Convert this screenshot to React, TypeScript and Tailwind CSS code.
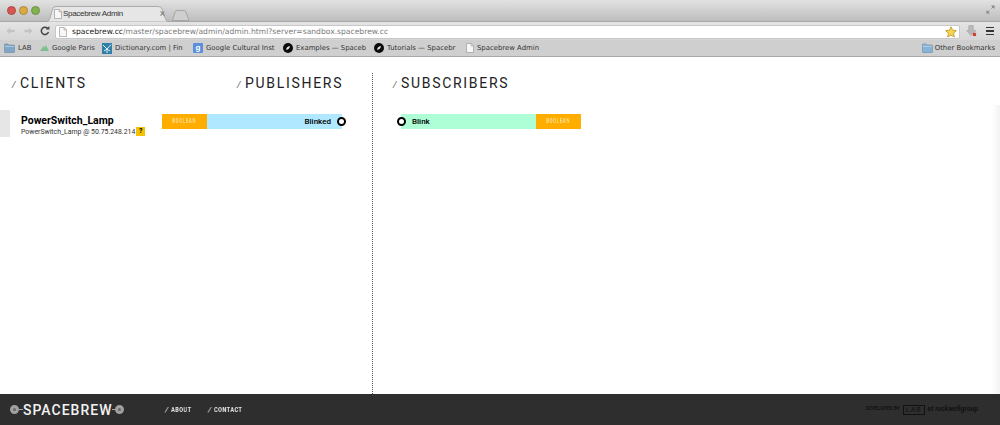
import React from "react";

const Folder = ({ c = "#7fa6c6" }: { c?: string }) => (
  <svg width="11" height="10" viewBox="0 0 14 11" preserveAspectRatio="none" className="shrink-0">
    <path d="M0.5 2 Q0.5 1 1.5 1 H5 L6 2.2 H12.5 Q13.5 2.2 13.5 3.2 V9.5 Q13.5 10.5 12.5 10.5 H1.5 Q0.5 10.5 0.5 9.5 Z" fill={c} stroke="#5d7f9c" strokeWidth="0.6" />
    <rect x="1" y="3.2" width="12" height="1" fill="#b9d1e4" />
  </svg>
);

const Page = ({ w = 8 }: { w?: number }) => (
  <svg width={w} height="10" viewBox="0 0 9 11" preserveAspectRatio="none" className="shrink-0">
    <path d="M0.5 0.5 H5.8 L8.5 3.2 V10.5 H0.5 Z" fill="#f7f7f7" stroke="#9a9a9a" strokeWidth="0.8" />
    <path d="M5.8 0.5 V3.2 H8.5" fill="none" stroke="#9a9a9a" strokeWidth="0.7" />
  </svg>
);

const Squid = () => (
  <svg width="10" height="10" viewBox="0 0 10 10" className="shrink-0">
    <circle cx="5" cy="5" r="5" fill="#0b0b0b" />
    <path d="M3 6.8 Q3.4 3.6 6.9 2.9 Q6.6 6.4 3 6.8 Z" fill="#e8e8e8" />
  </svg>
);

const Bookmark = ({ icon, label, w }: { icon: React.ReactNode; label: string; w: string }) => (
  <div className={`flex items-center gap-[3px] overflow-hidden shrink-0 ${w}`}>
    {icon}
    <span className="whitespace-nowrap">{label}</span>
  </div>
);

const Type = () => (
  <div className="w-[45px] h-full bg-[#ffae00] text-[#ffdf94] text-[6.5px] font-bold tracking-[1px] flex items-center justify-center shrink-0">
    <span className="inline-block scale-x-[0.66] will-change-transform">BOOLEAN</span>
  </div>
);

const Dot = () => <span className="w-[9px] h-[9px] rounded-full border-2 border-black bg-white shrink-0 block" />;

const Heading = ({ children, w }: { children: string; w: string }) => (
  <div className={`flex items-baseline shrink-0 ${w}`}>
    <span className="text-[9px] text-[#555] italic w-[8px]">/</span>
    <span className="text-[14px] leading-[20px] tracking-[1.7px] text-[#222]">{children}</span>
  </div>
);

const FooterLink = ({ label, w }: { label: string; w: string }) => (
  <span className={`flex items-baseline ${w}`}>
    <span className="italic font-normal w-[6px] shrink-0">/</span>
    <span className="inline-block origin-left scale-x-[0.7] whitespace-nowrap will-change-transform">{label}</span>
  </span>
);

export default function App() {
  return (
    <div className="w-[1000px] h-[425px] overflow-hidden flex flex-col bg-white font-['Roboto',sans-serif]">
      {/* title bar */}
      <div className="h-[22px] shrink-0 bg-gradient-to-b from-[#e2e2e2] to-[#bdbdbd] flex items-end relative border-b border-[#a8a8a8]">
        <div className="flex gap-[3px] ml-[7px] mb-[6px] self-end">
          <span className="w-[9px] h-[9px] rounded-full bg-[#d9564f] border border-[#a84a46]" />
          <span className="w-[9px] h-[9px] rounded-full bg-[#dba93e] border border-[#a98a3f]" />
          <span className="w-[9px] h-[9px] rounded-full bg-[#82b34f] border border-[#6f9146]" />
        </div>
        <div className="relative w-[124px] h-[16px] ml-[6px] -mb-px flex items-center pl-[8px] pr-[5px]">
          <svg width="124" height="16" viewBox="0 0 124 16" className="absolute left-0 top-0">
            <path d="M0 16 Q3 16 4 12 L6.5 3 Q7.5 0.5 10 0.5 H112 Q115 0.5 116 3 L119 12 Q120 16 124 16 Z" fill="#e6e6e6" stroke="#a0a0a0" strokeWidth="0.8" />
          </svg>
          <span className="relative flex items-center gap-[1px] flex-1 font-['Liberation_Sans',sans-serif] text-[8px] text-[#333] tracking-[-0.3px]">
            <Page />
            <span>Spacebrew Admin</span>
          </span>
          <span className="relative text-[10px] leading-none text-[#777]">×</span>
        </div>
        <svg width="18" height="11" viewBox="0 0 18 11" className="ml-[2px]">
          <path d="M0.5 10.5 L3 2 Q3.5 0.5 5 0.5 H12 Q13.5 0.5 14 2 L17 10.5 Z" fill="#cfcfcf" stroke="#9c9c9c" strokeWidth="0.8" />
        </svg>
        <svg width="9" height="9" viewBox="0 0 10 10" className="absolute right-[5px] top-[5px]">
          <path d="M1 9 L4 6 M9 1 L6 4" stroke="#8a8a8a" strokeWidth="1" />
          <path d="M0.5 5.5 V9.5 H4.5 Z M9.5 4.5 V0.5 H5.5 Z" fill="#8a8a8a" />
        </svg>
      </div>

      {/* toolbar */}
      <div className="h-[18px] shrink-0 bg-gradient-to-b from-[#e4e4e4] to-[#d6d6d6] flex items-center">
        <div className="flex items-center w-[55px] shrink-0 pl-[6px]">
          <svg width="9" height="8" viewBox="0 0 11 9"><path d="M5 0.5 L0.5 4.5 L5 8.5 V6 H10.5 V3 H5 Z" fill="#c4c4c4" /></svg>
          <svg width="9" height="8" viewBox="0 0 11 9" className="ml-[9px]"><path d="M6 0.5 L10.5 4.5 L6 8.5 V6 H0.5 V3 H6 Z" fill="#c4c4c4" /></svg>
          <svg width="10" height="10" viewBox="0 0 11 11" className="ml-[7px]">
            <path d="M8.8 3.2 A4 4 0 1 0 9.3 6.5" fill="none" stroke="#444" strokeWidth="1.7" />
            <path d="M6.4 3.9 H10.4 V0 Z" fill="#444" />
          </svg>
        </div>
        <div className="flex-1 h-[14px] mt-[1px] bg-white rounded-[2px] border border-[#c8c8c8] flex items-center pl-[3px] pr-[2px] font-['DejaVu_Sans',sans-serif] text-[7.6px] text-[#7b7b7b]">
          <Page />
          <span className="ml-[5px]"><span className="text-[#222]">spacebrew.cc</span>/master/spacebrew/admin/admin.html?server=sandbox.spacebrew.cc</span>
          <svg width="12" height="12" viewBox="0 0 24 24" className="ml-auto">
            <path d="M12 1.5 L15.2 8.5 L22.8 9.3 L17.1 14.4 L18.7 22 L12 18.1 L5.3 22 L6.9 14.4 L1.2 9.3 L8.8 8.5 Z" fill="#f8d44f" stroke="#b99327" strokeWidth="1.6" />
          </svg>
        </div>
        <div className="w-[40px] shrink-0 flex items-center pl-[6px]">
          <svg width="11" height="12" viewBox="0 0 12 13">
            <path d="M3 0.5 H8 V6 H11 L5.5 11.5 L0.5 6 H3 Z" fill="#b9b9b9" stroke="#9a9a9a" strokeWidth="0.5" />
            <rect x="7.5" y="8.5" width="3.5" height="3.5" fill="#d0413c" />
          </svg>
          <div className="ml-[9px] flex flex-col gap-[2px]">
            <span className="w-[8px] h-[1.6px] bg-[#333] block" />
            <span className="w-[8px] h-[1.6px] bg-[#333] block" />
            <span className="w-[8px] h-[1.6px] bg-[#333] block" />
          </div>
        </div>
      </div>

      {/* bookmarks */}
      <div className="h-[17px] shrink-0 bg-[#cfcfcf] border-b border-[#a9a9a9] flex items-center pl-[4px] pr-[5px] font-['DejaVu_Sans',sans-serif] text-[6.9px] text-[#333]">
        <Bookmark icon={<Folder />} label="LAB" w="w-[36px]" />
        <Bookmark
          icon={
            <svg width="9" height="7" viewBox="0 0 10 8" className="shrink-0">
              <path d="M0 8 L3.5 2.5 L5 4 L6.5 1 L10 8 Z" fill="#7cc08f" />
            </svg>
          }
          label="Google Paris"
          w="w-[62px]"
        />
        <Bookmark
          icon={
            <svg width="10" height="11" viewBox="0 0 10 11" className="shrink-0">
              <rect width="10" height="11" fill="#2f7fa8" />
              <path d="M1 2 L5 6 L9 1.5 M5 6 V10 M2 8 L5 6 L8 8" stroke="#dff1f8" strokeWidth="1" fill="none" />
            </svg>
          }
          label="Dictionary.com | Fin"
          w="w-[91px]"
        />
        <Bookmark
          icon={
            <span className="w-[10px] h-[10px] bg-[#5b8fdc] rounded-[1px] text-white text-[8px] leading-[10px] text-center shrink-0 font-bold font-['Liberation_Sans',sans-serif]">
              g
            </span>
          }
          label="Google Cultural Inst"
          w="w-[90px]"
        />
        <Bookmark icon={<Squid />} label="Examples — Spaceb" w="w-[91px]" />
        <Bookmark icon={<Squid />} label="Tutorials — Spacebr" w="w-[92px]" />
        <Bookmark icon={<Page />} label="Spacebrew Admin" w="w-[100px]" />
        <div className="ml-auto flex items-center gap-[2px]">
          <Folder c="#86b4d8" />
          <span>Other Bookmarks</span>
        </div>
      </div>

      {/* main */}
      <div className="flex-1 min-h-0 flex relative">
        <div className="w-[373px] shrink-0 border-r border-dotted border-[#555] pl-[12px] mt-[16px] flex flex-col">
          <div className="flex">
            <Heading w="w-[225px]">CLIENTS</Heading>
            <Heading w="w-[120px]">PUBLISHERS</Heading>
          </div>
          <div className="flex -ml-[12px] mt-[17px] h-[27px]">
            <div className="w-[10px] h-full bg-[#e6e6e6] shrink-0" />
            <div className="w-[152px] pl-[11px] shrink-0 text-[#222]">
              <div className="text-[10.5px] leading-[13px] mt-[4px] font-bold text-black">PowerSwitch_Lamp</div>
              <div className="flex items-center text-[6.9px] leading-[9px] text-[#333]">
                <span>PowerSwitch_Lamp @ 50.75.248.214</span>
                <span className="ml-[1px] mb-[2px] w-[9px] h-[9px] bg-[#f5c200] text-[7px] font-bold text-black leading-[9px] text-center">?</span>
              </div>
            </div>
            <div className="relative w-[180px] h-[15px] mt-[4px] flex bg-[#b0e8ff]">
              <Type />
              <span className="ml-auto mr-[11px] text-[8px] leading-[15px] text-black font-medium">Blinked</span>
              <span className="absolute right-[-4px] top-[3px]"><Dot /></span>
            </div>
          </div>
        </div>

        <div className="flex-1 min-w-0 pl-[20px] pt-[16px] flex flex-col">
          <Heading w="w-[200px]">SUBSCRIBERS</Heading>
          <div className="relative ml-[8px] mt-[21px] w-[180px] h-[15px] flex bg-[#aeffd6]">
            <span className="absolute left-[-4px] top-[3px]"><Dot /></span>
            <span className="ml-[11px] text-[8px] leading-[15px] text-black font-medium flex-1">Blink</span>
            <Type />
          </div>
        </div>

        <div className="absolute right-0 top-[48px] bottom-0 w-[8px] bg-gradient-to-r from-white to-[#f3f3f3]" />
      </div>

      {/* footer */}
      <div className="h-[31px] shrink-0 bg-[#2e2e2e] flex items-center text-white">
        <div className="flex items-center ml-[10px] w-[155px] shrink-0">
          <span className="w-[9px] h-[9px] rounded-full border-[3px] border-[#a0a0a0] bg-[#666] shrink-0" />
          <span className="w-[4px] h-px bg-[#aaa]" />
          <span className="text-[14px] font-medium tracking-[1px] leading-none text-[#f2f2f2]">SPACEBREW</span>
          <span className="w-[3px] h-px bg-[#aaa]" />
          <span className="w-[9px] h-[9px] rounded-full border-[3px] border-[#a0a0a0] bg-[#666] shrink-0" />
        </div>
        <div className="flex text-[8px] font-bold tracking-[0.6px] text-[#e5e5e5]">
          <FooterLink label="ABOUT" w="w-[43px]" />
          <FooterLink label="CONTACT" w="w-[50px]" />
        </div>
        <div className="ml-auto mr-[22px] flex items-center text-[4.5px] text-[#111] font-bold">
          <span className="tracking-[0.2px]">DEVELOPED BY</span>
          <span className="mx-[3px] border border-[#111] px-[2px] text-[7px] leading-[8px] tracking-[1px] font-normal">LAB</span>
          <span className="text-[6.5px] tracking-[0.1px]">at rockwellgroup</span>
        </div>
      </div>
    </div>
  );
}
